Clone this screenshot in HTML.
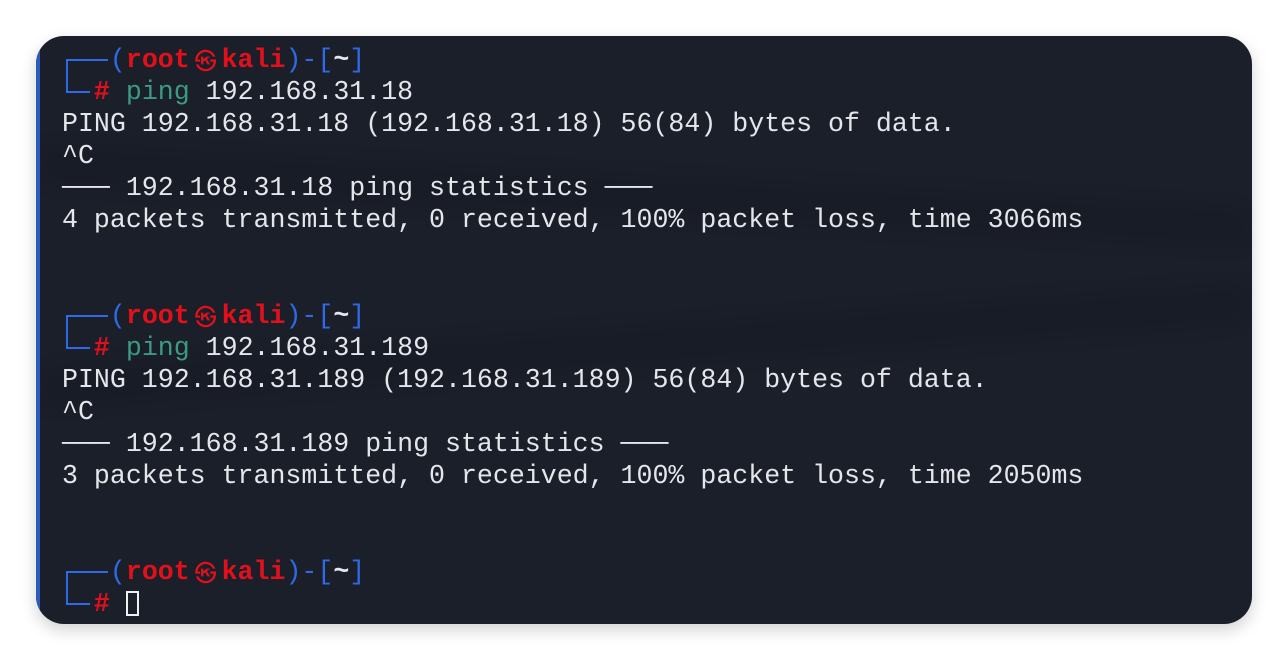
<!DOCTYPE html>
<html><head><meta charset="utf-8"><style>
body{margin:0;width:1288px;height:660px;background:#fff;overflow:hidden;position:relative}
.term{position:absolute;left:36px;top:36px;width:1216px;height:588px;border-radius:28px;background:#1b1f2a;overflow:hidden;box-shadow:0 6px 16px rgba(0,0,0,0.18)}
.lb{position:absolute;left:0;top:0;width:4px;height:100%;background:#2a5bbd}
.txt{position:absolute;left:26px;top:8px;font-family:"Liberation Mono",monospace;font-size:26.6px;line-height:32px;color:#e4e6ea;white-space:pre}
.b{color:#2e6ae6}.r{color:#e3101c;font-weight:bold}.g{color:#3c9a80}
.ln{position:absolute;background:#2e6ae6}
.cur{display:inline-block;width:13px;height:25px;border:2px solid #f0f0f0;vertical-align:-5px;box-sizing:border-box}
.sw{position:absolute;left:0;width:100%;height:40px;background:rgba(0,0,0,0.12);filter:blur(14px)}
.at{display:inline-block;width:31.9px;height:32px;text-align:center;font-size:22px;font-family:"Noto Sans CJK JP",sans-serif;vertical-align:top;overflow:hidden;line-height:32px;font-weight:normal}
</style></head><body>
<div class="term">
<div class="sw" style="top:140px;transform:skewY(3deg)"></div>
<div class="sw" style="top:290px;transform:skewY(-4deg)"></div>
<div class="lb"></div>
<div class="ln" style="left:30px;top:23px;width:42px;height:2px"></div>
<div class="ln" style="left:30px;top:23px;width:2px;height:33px"></div>
<div class="ln" style="left:30px;top:55px;width:24px;height:2px"></div>
<div class="ln" style="left:30px;top:279px;width:42px;height:2px"></div>
<div class="ln" style="left:30px;top:279px;width:2px;height:33px"></div>
<div class="ln" style="left:30px;top:311px;width:24px;height:2px"></div>
<div class="ln" style="left:30px;top:535px;width:42px;height:2px"></div>
<div class="ln" style="left:30px;top:535px;width:2px;height:33px"></div>
<div class="ln" style="left:30px;top:567px;width:24px;height:2px"></div>
<div class="txt">   <span class="b">(</span><span class="r">root<span class="at">㉿</span>kali</span><span class="b">)-[</span><b>~</b><span class="b">]</span>
  <span class="r">#</span> <span class="g">ping</span> 192.168.31.18
PING 192.168.31.18 (192.168.31.18) 56(84) bytes of data.
^C
─── 192.168.31.18 ping statistics ───
4 packets transmitted, 0 received, 100% packet loss, time 3066ms


   <span class="b">(</span><span class="r">root<span class="at">㉿</span>kali</span><span class="b">)-[</span><b>~</b><span class="b">]</span>
  <span class="r">#</span> <span class="g">ping</span> 192.168.31.189
PING 192.168.31.189 (192.168.31.189) 56(84) bytes of data.
^C
─── 192.168.31.189 ping statistics ───
3 packets transmitted, 0 received, 100% packet loss, time 2050ms


   <span class="b">(</span><span class="r">root<span class="at">㉿</span>kali</span><span class="b">)-[</span><b>~</b><span class="b">]</span>
  <span class="r">#</span> <span class="cur"></span></div>
</div>
</body></html>
